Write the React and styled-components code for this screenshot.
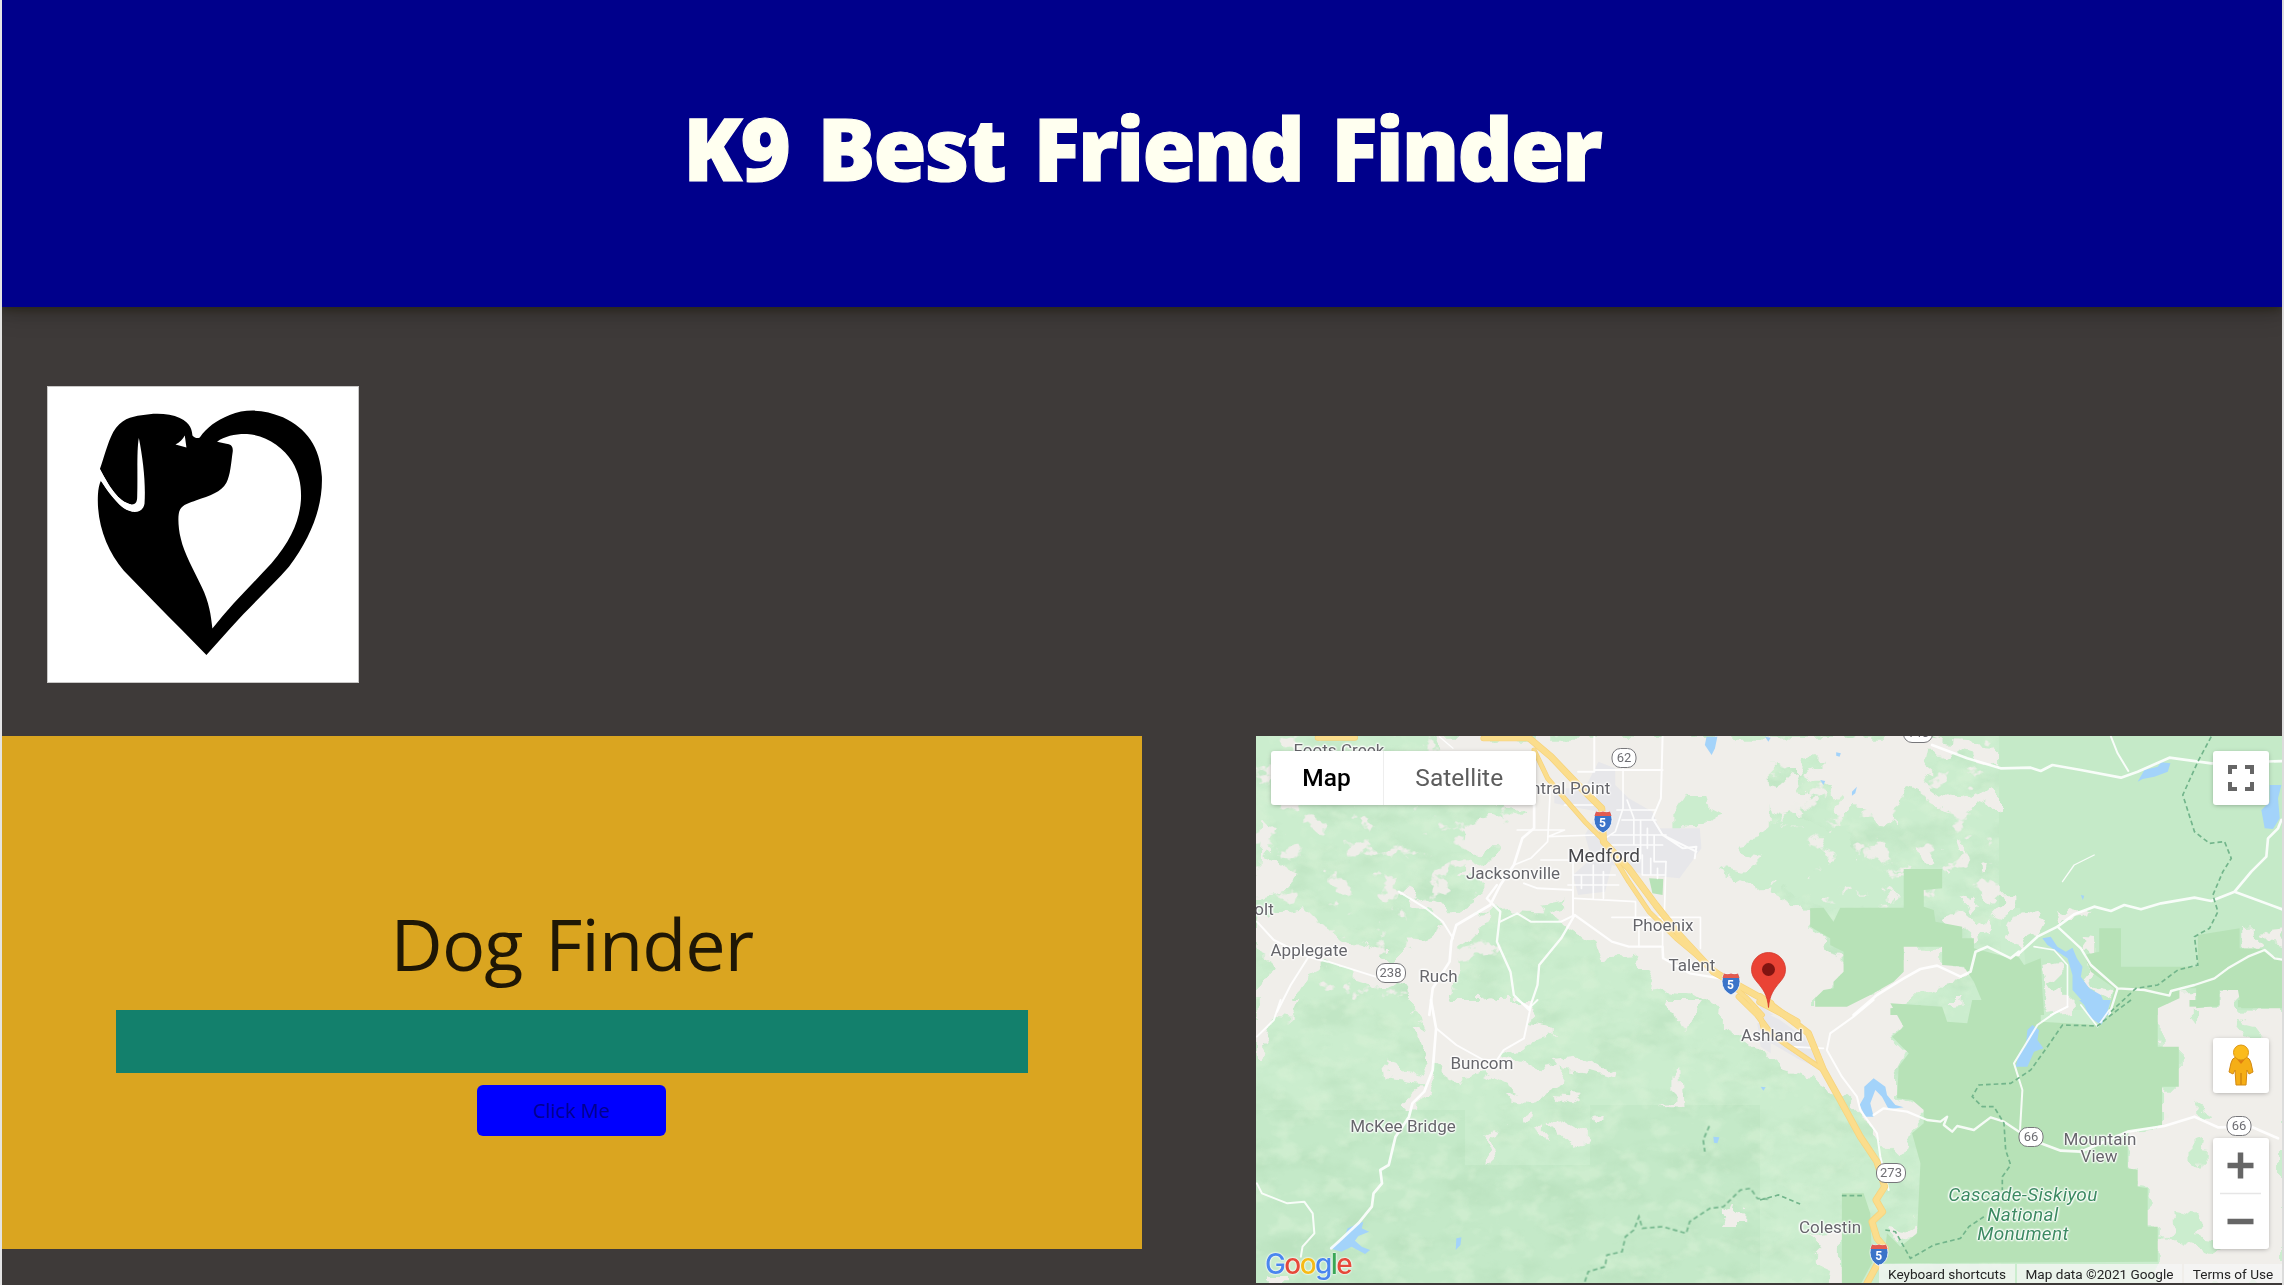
import React from "react";
import styled, { createGlobalStyle } from "styled-components";

const GlobalStyle = createGlobalStyle`
  *, *::before, *::after { box-sizing: border-box; }
  html, body { margin: 0; padding: 0; background: #3e3a39; overflow: hidden; }
  body { font-family: "Open Sans", "Noto Sans", sans-serif; }
`;

const Page = styled.div`
  width: 2284px;
  height: 1285px;
  display: flex;
  flex-direction: column;
  background: #3e3a39;
  border-left: 2px solid #e4e4e4;
  border-right: 2px solid #dcdcdc;
  overflow: hidden;
`;

const Header = styled.header`
  flex: none;
  height: 307px;
  padding-bottom: 11px;
  display: flex;
  align-items: center;
  justify-content: center;
  background: #00008b;
  box-shadow: 0 3px 8px rgba(30, 26, 8, 0.5), 0 8px 22px rgba(0, 0, 0, 0.18);
`;

const Title = styled.h1`
  margin: 0;
  color: #fffff0;
  font-size: 86px;
  font-weight: 800;
  line-height: 1;
  letter-spacing: -1.9px;
  word-spacing: 8px;
  -webkit-text-stroke: 1.2px #fffff0;
  white-space: nowrap;
`;

const LogoRow = styled.section`
  flex: none;
  height: 429px;
  padding: 79px 0 0 45px;
`;

const LogoCard = styled.div`
  width: 311.5px;
  height: 297px;
  background: #fff;
  border: 1px solid #c9c8c7;
`;

const LogoSvg = styled.svg`
  display: block;
  width: 100%;
  height: 100%;
`;

const Panels = styled.main`
  flex: 1;
  display: flex;
  align-items: flex-start;
  justify-content: space-between;
`;

const Finder = styled.section`
  width: 1140px;
  height: 513px;
  padding-top: 165px;
  display: flex;
  flex-direction: column;
  align-items: center;
  background: #daa520;
`;

const FinderTitle = styled.h2`
  margin: 0;
  height: 109px;
  line-height: 84px;
  color: #1f1705;
  font-size: 72px;
  font-weight: 400;
  letter-spacing: -0.9px;
  word-spacing: 5px;
  white-space: nowrap;
`;

const SearchField = styled.div`
  width: 912px;
  height: 63px;
  background: #13806c;
`;

const ClickButton = styled.button`
  width: 189px;
  height: 51px;
  margin: 12px 1px 0 0;
  padding: 0;
  border: 0;
  border-radius: 6px;
  background: #0000ff;
  color: #00008f;
  font: 400 20px/51px "Open Sans", sans-serif;
`;

const MapFrame = styled.section`
  position: relative;
  width: 1026px;
  height: 547px;
  overflow: hidden;
  background: #ceeed0;
  font-family: Roboto, sans-serif;
`;

const MapSvg = styled.svg`
  display: block;
  width: 1026px;
  height: 547px;
`;

/* Items pinned on the map canvas, centred on their point */
const Pinned = styled.div`
  position: absolute;
  left: ${(p) => p.$x - 1256}px;
  top: ${(p) => p.$y - 736}px;
  transform: translate(-50%, -50%);
`;

const Place = styled(Pinned)`
  color: ${(p) => p.$color || "#66666b"};
  font-size: ${(p) => p.$size || 17}px;
  font-style: ${(p) => (p.$italic ? "italic" : "normal")};
  line-height: 1;
  letter-spacing: ${(p) => p.$track ?? 0.05}px;
  white-space: nowrap;
  text-shadow: 0 0 2px #fff, 0 0 2px #fff, 1px 0 2px #fff, -1px 0 2px #fff,
    0 1px 2px #fff, 0 -1px 2px #fff;
`;

const Route = styled(Pinned)`
  width: ${(p) => p.$w || 25}px;
  height: 20px;
  border: 1.6px solid #77777b;
  border-radius: 9px;
  background: #fff;
  color: #6d6d72;
  font-size: 13px;
  line-height: 17px;
  text-align: center;
`;

const Interstate = styled(Pinned)`
  width: 20px;
  height: 23px;
  color: #fff;
  font-size: 12px;
  font-weight: 700;
  line-height: 25px;
  text-align: center;
  svg { position: absolute; inset: 0; }
  span { position: relative; }
`;

const Marker = styled.svg`
  position: absolute;
  left: ${1768.7 - 17.5 - 1256}px;
  top: 215.5px;
  width: 35px;
  height: 56px;
`;

const Control = styled.div`
  position: absolute;
  display: flex;
  background: #fff;
  border-radius: 3px;
  box-shadow: 0 1px 5px -1px rgba(0, 0, 0, 0.35);
`;

const MapTypes = styled(Control)`
  left: 14.5px;
  top: 14.5px;
  width: 265.5px;
  height: 54.5px;
`;

const MapType = styled.div`
  flex: none;
  width: ${(p) => p.$w}px;
  padding-right: ${(p) => (p.$active ? 0 : 1)}px;
  line-height: 54px;
  text-align: center;
  font-size: 24.5px;
  font-weight: ${(p) => (p.$active ? 500 : 400)};
  color: ${(p) => (p.$active ? "#000" : "#5d5d5d")};
  border-left: ${(p) => (p.$active ? "0" : "1px solid #eee")};
`;

const SideControl = styled(Control)`
  right: 13.5px;
  top: ${(p) => p.$top}px;
  width: 55.5px;
  height: ${(p) => p.$h}px;
  flex-direction: column;
  align-items: center;
  justify-content: center;
`;

const GoogleMark = styled.div`
  position: absolute;
  left: 9px;
  bottom: 3px;
  font: 500 28px/32px "Inter", sans-serif;
  letter-spacing: -1.6px;
  text-shadow: 0 0 2px #fff, 0 0 2px #fff, 0 0 1px #fff;
`;

const Letter = styled.span`
  color: ${(p) => p.$c};
`;

const Attribution = styled.div`
  position: absolute;
  right: 0;
  bottom: 0;
  height: 19px;
  display: flex;
  gap: 2px;
  color: #242424;
  font-size: 13.6px;
  line-height: 20px;
  white-space: nowrap;
`;

const Credit = styled.span`
  width: ${(p) => p.$w}px;
  text-align: center;
  background: rgba(245, 245, 245, 0.74);
`;

/* The map is drawn as four tiles, each with its own local units */
const TILES = {
  nw: "translate(1240 725) scale(.33807 .33333)",
  ne: "translate(1760 725) scale(.33422 .33333)",
  sw: "translate(1240 1000) scale(.33807 .33333)",
  se: "translate(1760 1000) scale(.33422 .33333)",
};

const poly = (s) => "M" + s + "Z";

const LAND = {
  nw: [
    "560,35 1570,35 1570,870 1450,870 1340,800 1260,790 1200,800 1215,730 1160,690 1080,700 1030,660 990,625 900,560 830,555 770,560 720,560 690,580 650,620 610,600 540,545 450,500 500,500 590,545 650,560 720,520 720,480 690,440 640,430 700,410 750,405 770,370 730,370 700,395 660,370 665,310 700,280 745,270 790,290 840,262 760,240 620,120",
    "50,590 130,560 190,550 240,600 330,660 430,690 500,690 510,650 560,640 620,600 680,580 740,560 700,620 640,660 650,740 620,800 640,840 590,870 510,870 500,800 420,775 330,760 260,720 200,750 160,820 170,870 120,870 50,870 50,780 110,740 90,700 50,680",
    "60,300 110,310 90,350 60,390 120,420 170,450 130,500 50,520",
    "600,840 740,820 860,840 840,870 590,870",
  ],
  ne: [
    "0,35 500,35 600,50 715,60 715,125 640,105 560,80 500,80 490,125 520,150 480,170 520,200 560,215 610,195 715,210 715,262 650,235 560,270 500,225 450,195 430,235 400,260 415,300 350,290 320,250 270,245 250,280 220,270 250,220 220,190 160,160 130,140 190,120 190,95 130,105 120,150 60,150 20,100 0,100",
    "0,480 60,510 140,550 150,605 205,640 215,680 250,690 250,740 220,770 165,820 165,845 260,845 330,800 430,740 430,665 545,665 545,720 630,730 640,760 560,770 540,800 480,790 440,830 400,850 400,870 0,870",
    "0,120 50,190 110,150 140,210 120,260 60,280 30,230 0,260",
    "770,570 830,555 850,590 830,630 790,650 770,690 735,640 755,600",
    "710,490 770,490 770,520 745,570 715,590 700,560 725,530",
    "610,495 640,510 645,550 630,570 610,530",
    "665,500 692,515 685,545 665,535",
    "665,420 688,430 682,465 668,455",
    "480,365 530,380 535,415 500,410",
    "590,335 615,350 622,390 600,380",
    "550,435 570,440 560,460",
    "550,580 600,560 650,600 700,580 690,620 640,635 600,605 550,600",
    "880,555 950,570 990,560 985,580 920,595 900,610",
    "150,310 220,330 285,405 250,420 265,480 200,440 210,400 160,370",
    "50,350 90,320 140,330 110,360 60,375",
    "90,400 130,380 135,400 100,412",
    "0,300 40,325 30,340 0,330",
    "960,635 1015,640 1015,680 960,680 980,650",
    "1440,615 1495,612 1498,670 1440,672",
    "1510,620 1560,615 1560,670 1530,660",
    "845,720 890,710 890,760 860,780 890,800 920,780 925,860 845,870 860,800",
    "1255,790 1305,790 1305,850 1190,870 1220,840",
    "1375,795 1435,795 1440,850 1568,850 1568,870 1190,870 1190,850 1375,850",
    "970,725 1000,740 990,775 1060,790 1050,820 1010,800 975,770",
    "1500,700 1550,730 1500,730",
    "765,690 805,715 780,720",
  ],
  sw: [
    "500,0 870,0 855,75 940,90 940,110 850,130 780,170 880,205 960,190 950,250 860,305 780,290 820,270 720,220 650,240 590,200 560,250 540,290 510,340 480,310 540,250 430,235 420,170 480,210 530,230 560,190 520,90 560,80 500,40",
    "50,0 190,0 160,65 100,60 60,180 50,180",
    "920,370 960,380 985,370 1020,390 1020,430 980,440 940,400",
    "725,410 780,378 770,400 745,410 765,470 728,488 745,440",
    "1285,215 1305,195 1312,318 1245,315 1285,290",
    "1430,625 1460,612 1488,620 1485,675 1440,675 1460,650",
    "835,345 860,332 875,350 845,365",
    "875,375 900,380 895,425",
    "1045,355 1075,345 1075,370 1050,378",
    "1262,0 1360,0 1330,80 1290,60",
    "1430,0 1570,0 1570,160 1530,150 1470,100 1425,80",
    "930,180 1000,170 1100,215 1095,235 1030,215 960,200",
    "920,285 1010,290 980,310 940,300",
    "90,825 130,825 130,850 85,850",
  ],
  se: [
    "0,0 400,0 400,20 420,80 390,110 440,160 410,220 410,290 490,330 490,370 450,400 430,450 400,460 370,430 340,380 300,350 240,290 180,250 130,210 70,190 0,130",
    "1190,20 1568,20 1568,855 1190,855 1190,680 1160,680 1160,565 1130,560 1130,510 1100,505 1100,395 1203,375 1203,260 1253,260 1253,140 1190,140",
    "150,700 245,680 245,855 200,855 210,810 155,785 190,750",
    "380,680 440,690 470,670 470,700 420,730",
    "560,0 600,0 600,15 580,18",
    "775,80 820,70 800,130 775,160",
  ],
};

const WOODS = {
  nw: ["1285,245 1320,195 1370,195 1380,255 1420,275 1370,295 1350,310 1285,305", "1490,350 1570,330 1570,480 1510,490 1420,450 1430,430 1500,440 1530,410", "870,530 940,515 960,550 900,570", "1195,375 1235,380 1230,400 1195,405"],
  ne: ["0,330 60,280 140,270 200,330 265,300 265,350 290,440 430,430 430,548 200,548 150,520 90,490 40,500 0,450"],
  sw: [],
  se: ["1295,305 1355,350 1320,350", "1300,425 1335,420 1325,500 1300,490", "1190,720 1250,645 1330,660 1310,700 1430,720 1350,765 1190,700", "1280,30 1305,30 1300,75 1280,50", "1440,50 1450,90 1530,110 1490,130 1430,110", "150,770 170,790 100,850 80,850"],
};

const PARK = {
  nw: ["1210,460 1252,462 1250,510 1220,505"],
  ne: [
    "430,432 545,432 545,490 490,495 490,545 520,555 525,590 605,605 605,640 640,640 640,670 750,700 770,690 790,720 840,700 845,800 850,870 640,870 665,830 640,770 610,725 545,720 545,665 430,665 430,740 400,770 330,810 260,845 165,845 165,820 190,795 220,790 220,770 250,740 250,680 210,660 210,640 150,605 150,550 190,548 220,590 240,548 430,548",
    "1015,610 1080,610 1080,725 1310,725 1310,630 1435,610 1435,670 1500,672 1568,710 1568,850 1440,850 1430,795 1375,795 1375,840 1305,850 1305,790 1255,790 1255,820 1190,850 1190,870 1040,870 1060,790 990,740 970,690 1015,680",
    "390,850 480,840 500,870 390,870",
  ],
  sw: [],
  se: [
    "390,10 545,20 560,65 620,70 635,0 840,0 840,65 1010,75 1050,15 1190,0 1190,140 1253,140 1253,260 1203,260 1203,375 1100,395 1100,505 1130,510 1130,560 1160,565 1160,680 1190,680 1190,785 370,790 380,700 420,740 470,700 480,490 455,400 490,370 490,330 455,300 410,295 415,200 445,160 395,110 430,80",
    "245,580 310,580 330,640 335,790 300,855 245,855",
    "190,0 262,0 262,18 190,18", "1285,0 1370,0 1370,20 1285,20", "1430,0 1568,0 1568,22 1430,22",
  ],
};

const URBAN = {
  nw: ["930,190 1020,190 1060,110 1110,130 1110,180 1150,220 1220,260 1240,310 1360,310 1365,370 1300,460 1200,450 1100,420 1080,500 1000,510 985,450 1040,400 1020,330 1060,260 930,235"],
  ne: ["0,840 40,870 0,870"],
  sw: ["1530,70 1570,60 1570,160 1540,140"],
  se: ["0,30 60,60 130,110 200,215 120,180 0,110"],
};

const WATER = {
  nw: ["1380,35 1412,35 1405,70 1395,90 1375,60"],
  ne: [
    "845,640 870,635 890,665 915,680 935,668 948,700 965,725 960,755 985,790 1020,810 1045,870 990,870 975,840 935,795 935,750 920,700 860,660",
    "1130,170 1150,135 1190,125 1200,112 1228,115 1220,140 1180,155 1145,162",
    "1525,180 1560,180 1550,220 1555,280 1535,312 1510,310 1500,255 1525,230",
    "275,200 290,185 285,205 275,212", "180,165 195,168 190,180", "228,82 242,85 238,95 228,92", "960,510 970,512 966,525", "15,35 32,38 25,50",
  ],
  sw: ["265,745 310,710 318,685 365,665 360,685 382,695 350,708 340,722 360,740 385,750 370,762 330,740 300,755", "640,715 655,712 652,735 638,750", "1400,410 1418,412 1412,430 1402,428", "1540,260 1555,262 1548,272"],
  se: [
    "955,0 1050,0 1035,50 1020,75 985,50 970,15",
    "800,90 815,75 835,90 830,120 848,145 820,155 800,200 765,200 775,160 795,140",
    "312,260 340,235 375,260 380,285 405,315 430,322 385,328 365,290 345,270 330,310 340,350 315,350 298,315 312,290",
  ],
};

const ROADS = {
  nw: [
    ["M870,240 L870,310 L835,340 L810,420 L770,480 L740,540 L640,600 L625,650 L620,710 L570,790 L560,870", 8],
    ["M810,420 L860,400 L910,350 L918,190", 5],
    ["M760,480 L730,520 L770,560 L760,650 L800,740 L810,810 L855,855 L880,780 L885,720 L950,640 L990,570 L1100,650 L1150,665 L1250,665 L1252,700 L1330,745 L1420,760", 7],
    ["M770,590 L820,565 L860,590 L950,590 L990,570", 6],
    ["M840,475 L880,490 L985,495 L985,570", 6],
    ["M50,590 L100,645 L200,695 L260,710 L400,755 M200,700 L150,780 L110,860 M470,500 L550,550 L600,590 L630,640", 6],
    ["M1048,35 L1048,140 L1000,140 M1048,135 L1250,135 M1250,35 L1245,220 L1220,280 L1250,330 L1350,380 M1250,330 L1310,370 L1350,365 L1345,400", 6],
    ["M1133,130 L1133,250 L1110,320 L1080,340 M1050,180 L1050,240 L960,240 M820,315 L960,315 L910,335 L1050,330 M1000,180 L1040,180", 5],
    ["M1145,225 L1165,280 L1165,360 M1115,255 L1230,255 M1130,285 L1230,285 M1100,330 L1260,330 M1185,285 L1185,400 M1205,310 L1205,370 M1100,360 L1250,360 M1225,330 L1225,410 L1260,410", 5],
    ["M890,405 L1060,405 M985,405 L985,520 M1010,450 L1010,490 M1045,420 L1045,520 M1075,440 L1075,520 M985,450 L1110,450 M970,480 L1120,480 M990,520 L1170,530 L1170,590 M1190,390 L1190,450 L1255,450 M1215,400 L1215,450 M1235,430 L1235,460", 5],
    ["M1260,410 L1255,575 M1100,577 L1362,577 L1362,670 M1180,580 L1180,665 M1250,580 L1250,700", 5],
    ["M590,35 L630,70", 4],
  ],
  ne: [
    ["M515,60 L620,100 L720,130 L810,128 L840,138 L875,120 L960,135 L1080,158 L1130,140 L1225,98 L1350,115 L1568,108", 8],
    ["M1050,35 L1070,85 L1102,138", 6],
    ["M770,690 L830,635 L890,605 L940,568 L1000,545 L1050,558 L1090,540 L1140,553 L1200,535 L1300,518 L1350,528 L1420,500 L1470,440 L1515,395 L1520,340 L1550,310 L1560,285 M1420,500 L1568,555", 8],
    ["M280,870 L350,810 L430,760 L480,732 L530,722 L600,755 L630,740 L645,680 L680,665 L750,700 L775,680", 8],
    ["M890,605 L960,670 L990,720 L1070,790 L1150,795 L1225,812 L1230,798 L1300,780 L1360,760 L1400,730 L1460,695 L1510,675 L1540,700 L1568,705 M1070,790 L1045,870", 7],
    ["M820,665 L880,675 L920,720 L920,845 L870,870", 5],
    ["M905,470 L940,420 L1000,390", 4],
  ],
  sw: [
    ["M565,0 L580,85 L570,210 L545,275 L510,310 L500,350 L460,410 L440,495 L415,510 L420,550 L395,580 L390,620 L350,670 L270,745", 8],
    ["M580,85 L640,135 L720,180 L760,180 L780,150 L840,115 L860,20 L880,0 M820,0 L855,22", 6],
    ["M120,0 L100,60 L50,110", 6],
    ["M50,550 L65,580 L140,610 L190,605 L215,640 L220,700 L185,740 L180,770", 6],
  ],
  se: [
    ["M340,0 L280,50 L210,100 L200,150 L245,230 L290,290 L300,330 L350,400 L360,470 L385,570", 6],
    ["M90,140 L190,145", 5],
    ["M340,345 L370,325 L440,335 L500,360 L540,365 L560,350 L550,375 L575,395 L590,378 L640,390 L690,352 L730,365 L775,395", 7],
    ["M920,20 L880,40 L830,75 L760,190 L785,270 L778,390", 6],
    ["M960,15 L1010,80 L1045,30", 5],
    ["M840,430 L900,452 L960,455 L1100,395 L1210,378 L1300,350 L1370,382 L1470,380 L1550,415", 8],
  ],
};

const HIGHWAYS = {
  nw: [
    ["M230,38 L340,38 M720,40 L850,40", 14],
    ["M850,35 L920,95 L1000,180 L1070,250 L1075,350 L1150,430 L1230,540 L1300,630 L1400,740 L1570,835", 17],
    ["M870,75 L910,160 L960,220 L1020,290 L1075,345 L1150,470 L1210,560 L1290,640 L1420,750 L1500,820 L1545,870", 11],
  ],
  ne: [["M0,830 L60,862 L110,890", 18]],
  sw: [["M1475,-10 L1530,45 L1570,100", 14]],
  se: [
    ["M0,45 L10,85 L80,135 L190,210", 12],
    ["M0,-10 L80,50 L145,100 L190,210 L240,300 L300,410 L350,485 L373,560 L347,600 L367,635 L335,665 L350,715 L375,745 L350,795 L320,850", 17],
  ],
};

const TRAILS = {
  nw: [],
  ne: ["M1350,35 L1310,110 L1265,210 L1300,320 L1345,355 L1390,350 L1410,400 L1385,440 L1355,510 L1370,560 L1345,610 L1300,635 L1310,720 L1250,735 L1190,780 L1125,790 L1050,860"],
  sw: ["M1020,845 L1030,815 L1080,800 L1085,765 L1130,755 L1140,710 L1165,690 L1180,650 L1190,685 L1250,680 L1320,700 L1330,665 L1390,625 L1430,620 L1480,570 L1510,565 L1530,595 L1570,598", "M1388,378 L1370,420 L1375,455"],
  se: [
    "M0,600 L55,585 L120,612 M245,587 L310,587",
    "M1110,0 L1050,45 L1010,78 L905,75 L860,140 L810,210 L750,250 L655,255 L635,290 L665,320 L700,320 L730,370 L735,450 L750,495 L725,530 L725,570",
    "M375,690 L405,695 L450,775 L520,735 L600,715 L625,680 L670,650",
  ],
};

const Areas = ({ data, fill }) =>
  Object.entries(data).map(([tile, shapes]) => (
    <g key={tile} transform={TILES[tile]} fill={fill}>
      {shapes.map((s, i) => (
        <path key={i} d={poly(s)} />
      ))}
    </g>
  ));

const Lines = ({ data, stroke, grow = 0, opacity = 1 }) =>
  Object.entries(data).map(([tile, lines]) => (
    <g key={tile} transform={TILES[tile]} fill="none" stroke={stroke} opacity={opacity} strokeLinejoin="round" strokeLinecap="round">
      {lines.map(([d, w], i) => (
        <path key={i} d={d} strokeWidth={w + grow} />
      ))}
    </g>
  ));

const Terrain = () => (
  <MapSvg viewBox="1256 736 1026 547" aria-hidden="true">
    <defs>
      <filter id="rough" x="-2%" y="-2%" width="104%" height="104%">
        <feTurbulence type="fractalNoise" baseFrequency="0.045" numOctaves="3" seed="7" result="n" />
        <feDisplacementMap in="SourceGraphic" in2="n" scale="24" xChannelSelector="R" yChannelSelector="G" />
      </filter>
      <filter id="speckle" x="0" y="0" width="100%" height="100%" colorInterpolationFilters="sRGB">
        <feTurbulence type="fractalNoise" baseFrequency="0.04 0.05" numOctaves="4" seed="12" />
        <feColorMatrix values="0 0 0 0 .937  0 0 0 0 .933  0 0 0 0 .914  14 0 0 0 -8.7" />
        <feComposite in2="SourceGraphic" operator="in" />
      </filter>
      <filter id="relief" x="0" y="0" width="100%" height="100%" colorInterpolationFilters="sRGB">
        <feTurbulence type="fractalNoise" baseFrequency="0.022 0.034" numOctaves="4" seed="3" />
        <feColorMatrix values="0 0 0 0 .62  0 0 0 0 .80  0 0 0 0 .64  0 3 0 0 -1.38" />
      </filter>
      <filter id="ridge" x="0" y="0" width="100%" height="100%" colorInterpolationFilters="sRGB">
        <feTurbulence type="fractalNoise" baseFrequency="0.04 0.055" numOctaves="3" seed="21" />
        <feColorMatrix values="0 0 0 0 .85  0 0 0 0 .95  0 0 0 0 .84  0 4 0 0 -2" />
      </filter>
    </defs>
    <rect x="1256" y="736" width="1026" height="547" fill="#cbedce" />
    <path d="M1256 1110H1465V1165H1590V1105H1760V1283H1256Z" fill="#c4e9c8" />
    <rect x="1256" y="736" width="745" height="547" filter="url(#relief)" opacity=".2" />
    <rect x="1256" y="736" width="745" height="547" filter="url(#ridge)" opacity=".5" />
    <path d="M1256 736H1560V860L1500 950 1460 1000H1256Z" filter="url(#speckle)" />
    <path d="M1760 736H1999V920H1900L1760 900Z" filter="url(#speckle)" />
    <path d="M1999 736H2282V1010H2030L2020 908H1999Z" fill="#c5eac8" />
    <g filter="url(#rough)">
      <Areas data={LAND} fill="#f0eeea" />
      <Areas data={WOODS} fill="#cbedce" />
      <path d="M1760 790H1840L1902 850V905H1830L1760 880Z" filter="url(#speckle)" />
    </g>
    <Areas data={URBAN} fill="#e7e7ea" />
    <Areas data={PARK} fill="#b7e2b7" />
    <Areas data={WATER} fill="#a3d3fa" />
    <Lines data={ROADS} stroke="#fff" opacity={0.88} />
    <Lines data={HIGHWAYS} stroke="#f6d27b" grow={4} />
    <Lines data={HIGHWAYS} stroke="#fbdd8c" />
    {Object.entries(TRAILS).map(([tile, ds]) => (
      <g key={tile} transform={TILES[tile]} fill="none" stroke="#72b58b" strokeWidth="5" strokeDasharray="14 9">
        {ds.map((d) => (
          <path key={d} d={d} />
        ))}
      </g>
    ))}
  </MapSvg>
);

const PLACES = [
  { t: "Foots Creek", x: 1339, y: 750 },
  { t: "Central Point", x: 1560.5, y: 788, track: 0.2 },
  { t: "Medford", x: 1604, y: 855, size: 19, color: "#48484c" },
  { t: "Jacksonville", x: 1513, y: 873 },
  { t: "Phoenix", x: 1663, y: 925 },
  { t: "Talent", x: 1692, y: 965 },
  { t: "olt", x: 1264, y: 909 },
  { t: "Applegate", x: 1309, y: 950 },
  { t: "Ruch", x: 1438.5, y: 976 },
  { t: "Ashland", x: 1772, y: 1035 },
  { t: "Buncom", x: 1482, y: 1063 },
  { t: "McKee Bridge", x: 1403, y: 1126 },
  { t: "Colestin", x: 1830, y: 1227 },
  { t: "Mountain", x: 2100, y: 1139, track: 0.2 },
  { t: "View", x: 2099, y: 1156 },
  { t: "Cascade-Siskiyou", x: 2023, y: 1194, size: 19, color: "#3d8b63", italic: true, track: 0.3 },
  { t: "National", x: 2023, y: 1213.5, size: 19, color: "#3d8b63", italic: true, track: 0.3 },
  { t: "Monument", x: 2023, y: 1233, size: 19, color: "#3d8b63", italic: true, track: 0.3 },
];

const ROUTES = [
  { t: "62", x: 1624, y: 757.5 },
  { t: "238", x: 1390.5, y: 973, w: 30 },
  { t: "66", x: 2031, y: 1137 },
  { t: "66", x: 2239, y: 1126 },
  { t: "273", x: 1891, y: 1173, w: 30 },
  { t: "140", x: 1918, y: 733, w: 30 },
];

const INTERSTATES = [
  [1602.5, 821.5],
  [1730.5, 983.5],
  [1878.7, 1254.5],
];

const GOOGLE = [
  ["G", "#4a86ee"],
  ["o", "#e5493a"],
  ["o", "#f6bb16"],
  ["g", "#4a86ee"],
  ["l", "#3aa757"],
  ["e", "#e5493a"],
];

const DogHeart = () => (
  <LogoSvg viewBox="144 111 930 884" preserveAspectRatio="none" role="img" aria-label="Dog and heart">
    <path
      fill="#000"
      d="M300,357 C312,325 322,280 340,246 C362,208 394,200 425,196 C465,188 510,190 540,204 C574,220 576,240 578,256 C586,264 593,266 600,262 C622,232 648,212 690,195 C740,175 795,178 850,202 C920,235 962,290 967,380 C970,470 935,560 868,650 C820,705 760,758 690,836 L620,914 L545,838 C490,783 430,722 372,662 C320,600 290,520 294,435 C295,415 298,402 303,392 C322,421 345,450 365,469 C390,490 428,494 434,461 C438,400 430,330 417,264 C410,300 414,380 412,440 C412,458 405,464 394,463 C355,455 328,410 300,357 Z"
    />
    <path
      fill="#fff"
      d="M652,275 C675,258 710,251 742,252 C800,255 850,290 878,335 C900,372 906,410 904,450 C900,510 875,570 815,640 C760,700 695,762 638,835 C634,795 628,755 606,710 C580,655 553,610 543,565 C534,530 534,490 540,480 C548,462 570,458 590,450 C630,438 665,425 680,398 C692,375 694,340 699,305 C701,287 692,282 680,281 Z"
    />
    <path fill="#fff" d="M527,283 C540,277 550,266 555,256 L560,292 Z" />
    <path fill="#fff" d="M300,357 C328,410 355,455 394,463 L400,484 C360,480 325,425 303,392 Z" />
  </LogoSvg>
);

const Pegman = () => (
  <svg width="26" height="43" viewBox="0 0 26 43">
    <path d="M8 13h10q4 1 5 6l2 9-4 2-2-4-1 15H8L7 26l-2 4-4-2 2-9q1-5 5-6z" fill="#f5ae16" stroke="#d48a12" strokeWidth="1" strokeLinejoin="round" />
    <path d="M13 29v12" stroke="#d48a12" strokeWidth="1.6" />
    <path d="M8 14l5 6 5-6z" fill="#df7d10" />
    <circle cx="13" cy="8.5" r="7.5" fill="#fbbb1c" stroke="#dc9713" strokeWidth="1" />
  </svg>
);

export default function App() {
  return (
    <>
      <GlobalStyle />
      <Page>
        <Header>
          <Title>K9 Best Friend Finder</Title>
        </Header>
        <LogoRow>
          <LogoCard>
            <DogHeart />
          </LogoCard>
        </LogoRow>
        <Panels>
          <Finder>
            <FinderTitle>Dog Finder</FinderTitle>
            <SearchField />
            <ClickButton>Click Me</ClickButton>
          </Finder>
          <MapFrame>
            <Terrain />
            {PLACES.map((p) => (
              <Place key={p.t} $x={p.x} $y={p.y} $size={p.size} $color={p.color} $italic={p.italic} $track={p.track}>
                {p.t}
              </Place>
            ))}
            {ROUTES.map((r, i) => (
              <Route key={i} $x={r.x} $y={r.y} $w={r.w}>
                {r.t}
              </Route>
            ))}
            {INTERSTATES.map(([x, y]) => (
              <Interstate key={x} $x={x} $y={y}>
                <svg width="20" height="23" viewBox="0 0 20 23">
                  <path d="M3 1q3.5 1.6 7 0 3.500 1.600 7 0 2 3 2 8 0 9-9 13.500-9-4.500-9-13.500 0-5 2-8z" fill="#3b74c9" stroke="#fff" strokeWidth=".8" />
                  <path d="M3 1q3.500 1.600 7 0 3.500 1.600 7 0l1.500 4.500h-17z" fill="#e35b50" />
                </svg>
                <span>5</span>
              </Interstate>
            ))}
            <Marker viewBox="0 0 35 56">
              <path d="M17.500 55.500C16.500 43 12 37 6 30 2.500 26 .5 22.500 .5 17.500a17 17 0 0 1 34 0c0 5-2 8.500-5.500 12.500-6 7-10.500 13-11.500 25.500z" fill="#ea4335" stroke="#d3382c" strokeWidth=".8" />
              <circle cx="17.500" cy="17.500" r="6.500" fill="#811411" />
            </Marker>
            <MapTypes>
              <MapType $w={112} $active>
                Map
              </MapType>
              <MapType $w={153.5}>Satellite</MapType>
            </MapTypes>
            <SideControl $top={14.5} $h={54.5}>
              <svg width="26" height="26" viewBox="0 0 26 26" fill="none" stroke="#666" strokeWidth="4">
                <path d="M2 9V2h7M17 2h7v7M24 17v7h-7M9 24H2v-7" />
              </svg>
            </SideControl>
            <SideControl $top={302} $h={54.5}>
              <Pegman />
            </SideControl>
            <SideControl $top={401.5} $h={111}>
              <svg width="55" height="111" viewBox="0 0 55 111">
                <path d="M14.500 27.500h26M27.500 14.500v26M14.500 83.500h26" stroke="#666" strokeWidth="5.500" />
                <path d="M7 55.500h41" stroke="#e6e6e6" strokeWidth="1.300" />
              </svg>
            </SideControl>
            <GoogleMark>
              {GOOGLE.map(([ch, c], i) => (
                <Letter key={i} $c={c}>
                  {ch}
                </Letter>
              ))}
            </GoogleMark>
            <Attribution>
              <Credit $w={136}>Keyboard shortcuts</Credit>
              <Credit $w={165}>Map data ©2021 Google</Credit>
              <Credit $w={98}>Terms of Use</Credit>
            </Attribution>
          </MapFrame>
        </Panels>
      </Page>
    </>
  );
}
